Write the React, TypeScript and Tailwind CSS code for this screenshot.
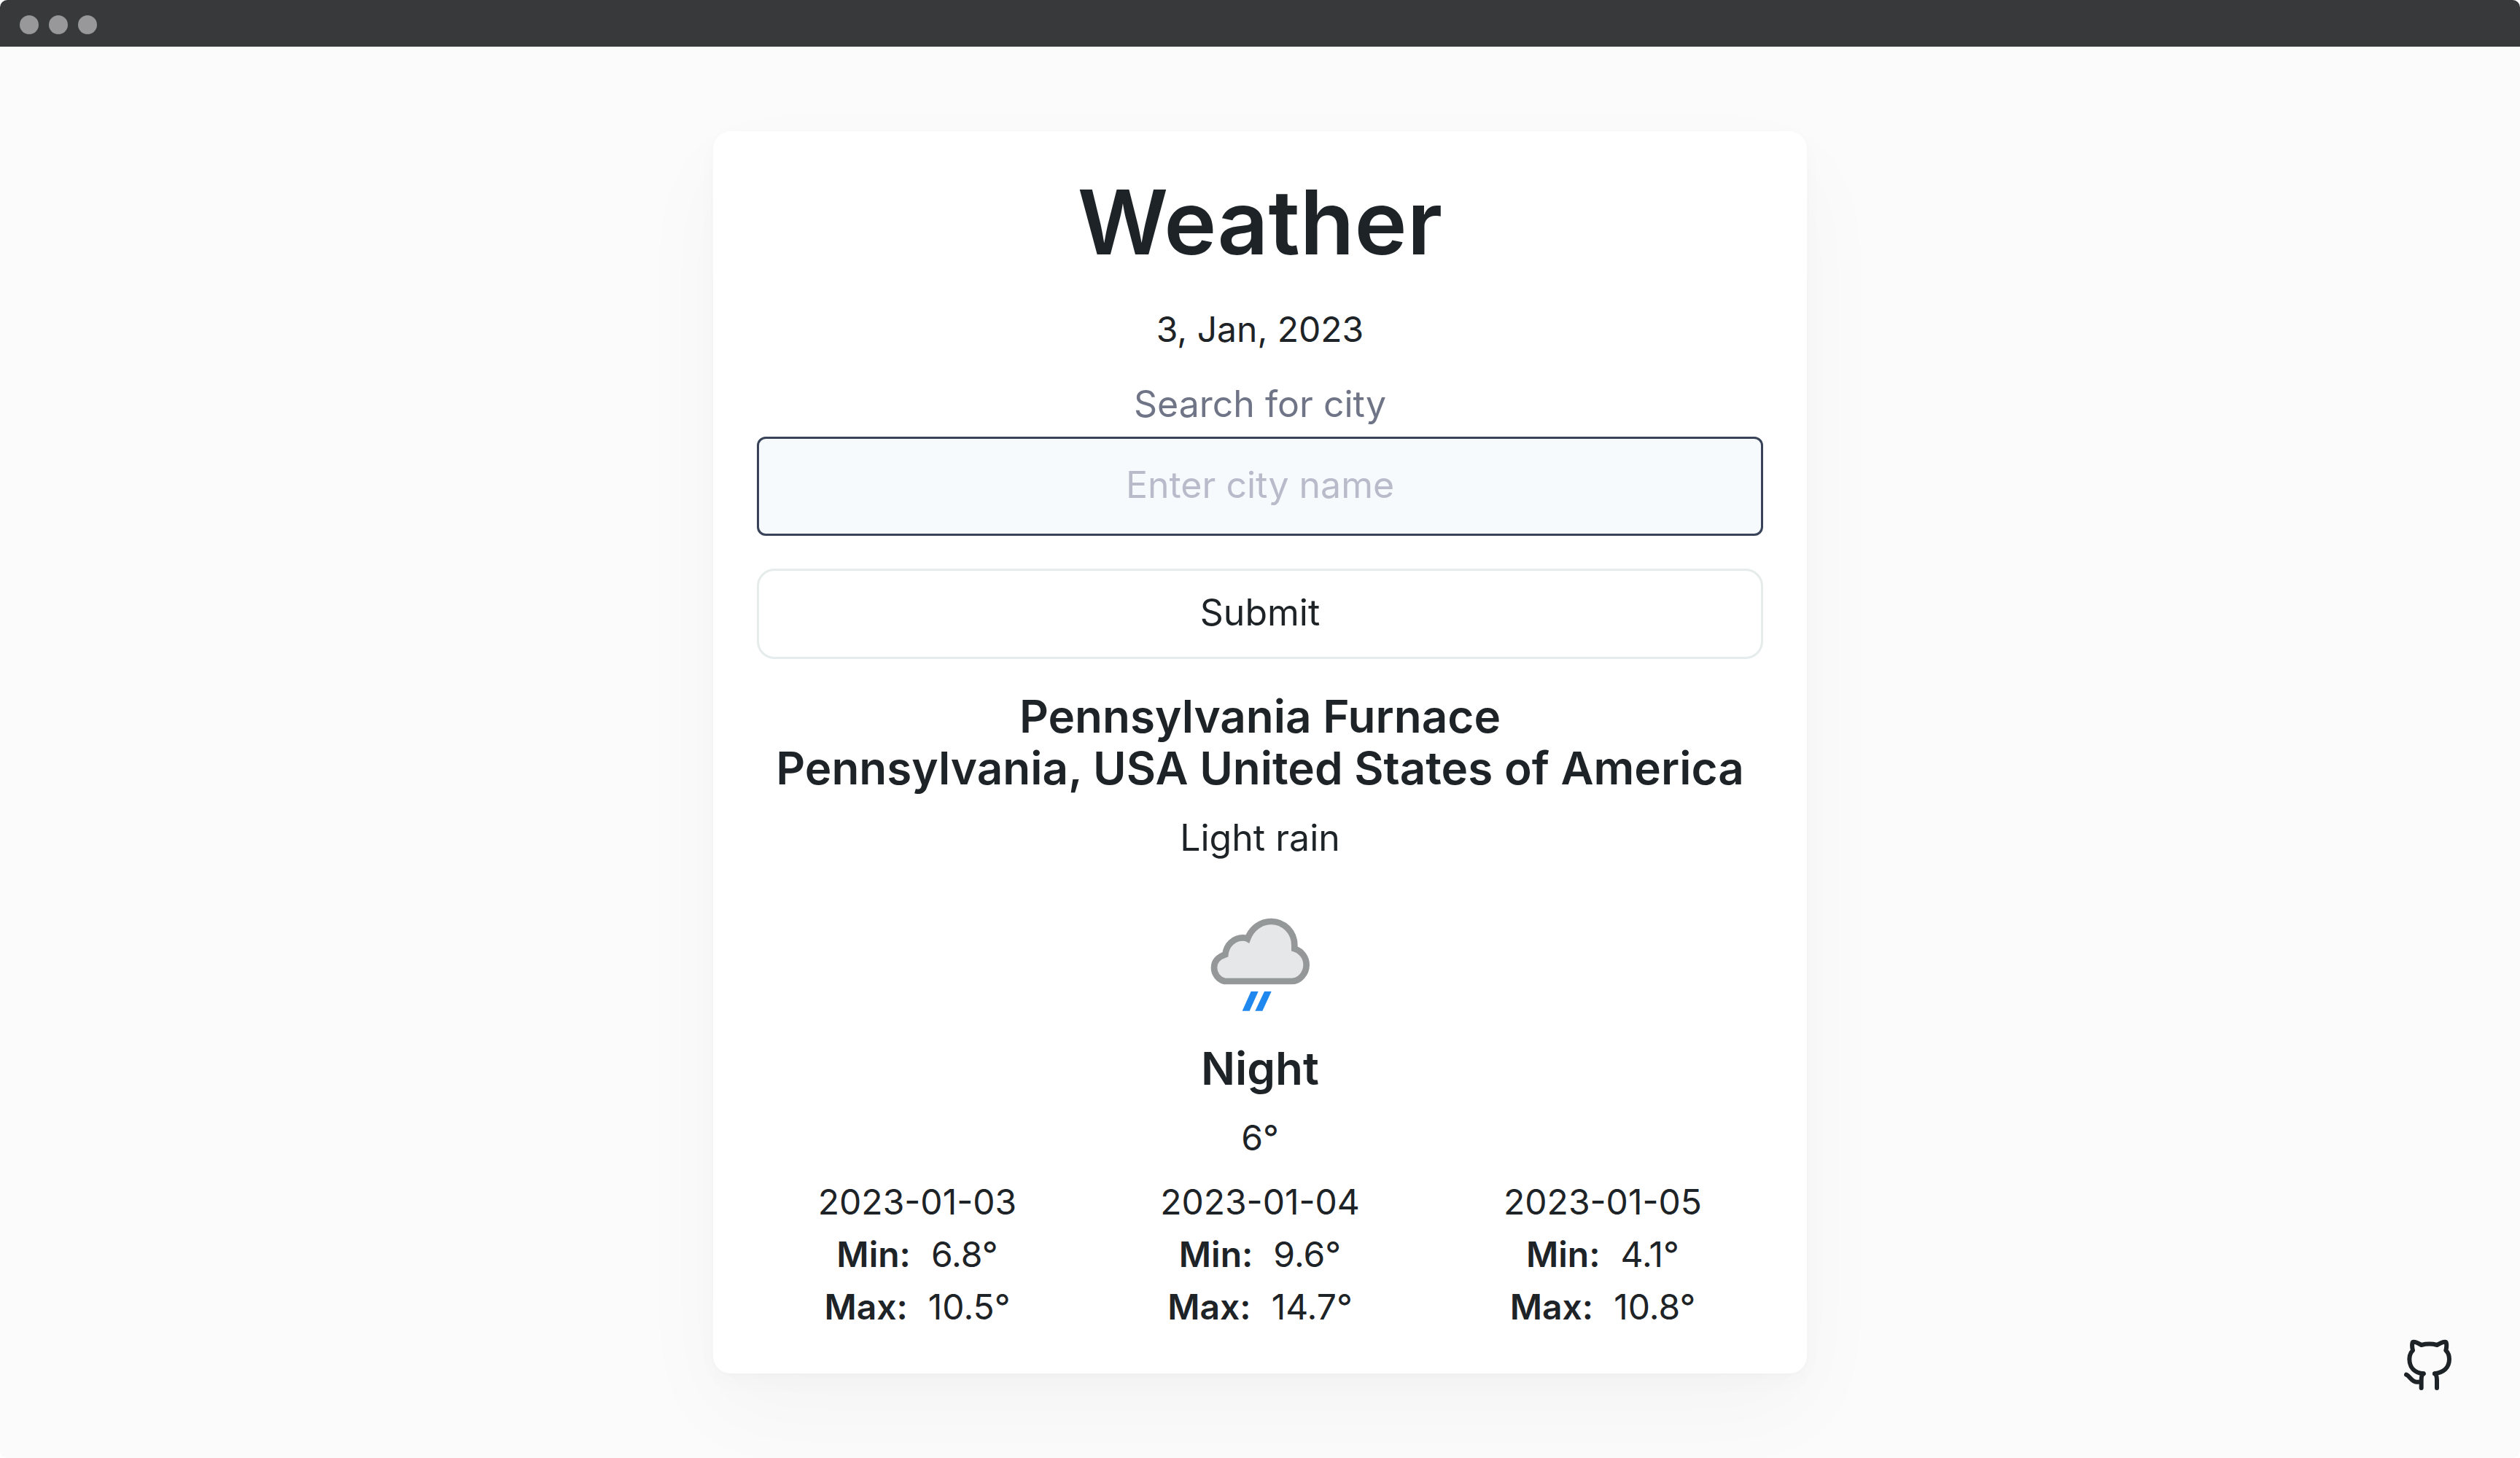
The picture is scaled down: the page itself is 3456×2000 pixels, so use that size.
type Forecast = { date: string; min: string; max: string };

const forecast: Forecast[] = [
  { date: "2023-01-03", min: "6.8°", max: "10.5°" },
  { date: "2023-01-04", min: "9.6°", max: "14.7°" },
  { date: "2023-01-05", min: "4.1°", max: "10.8°" },
];

function TitleBar() {
  return (
    <header className="flex h-16 items-center gap-[14px] bg-[#38393a] px-[27px] pt-1">
      <span className="size-[26px] rounded-full bg-[#98989a]" />
      <span className="size-[26px] rounded-full bg-[#98989a]" />
      <span className="size-[26px] rounded-full bg-[#98989a]" />
    </header>
  );
}

function RainIcon() {
  return (
    <svg viewBox="0 0 768 600" className="mt-[35px] mb-[10px] w-64" role="img" aria-label="Light rain">
      <path
        d="M238 378 A57 57 0 0 1 195 322 C195 297 212 277 241 268 C245 228 276 199 314 199 C321 199 328 200 333 203 C349 160 386 132 430 132 C484 132 526 176 526 230 V244 C555 253 575 280 575 310 C575 348 546 378 515 378 Z"
        fill="#e5e7e9"
        stroke="#949899"
        strokeWidth="26"
      />
      <path d="M347 420 H377 L341 500 H311 Z M402 420 H431 L394 500 H364 Z" fill="#1f88ee" />
    </svg>
  );
}

function GithubIcon() {
  return (
    <svg
      viewBox="165 108 207 216"
      className="h-[72px] w-[69px]"
      fill="none"
      stroke="#1d2326"
      strokeWidth="18"
      strokeLinecap="round"
      strokeLinejoin="round"
      aria-hidden="true"
    >
      <path d="M251 253 C215 250 193 228 193 193 C193 178 198 166 207 157 C204 145 203 134 206 124 Q207 122 210 122 C221 122 233 129 242 135 C262 130 288 130 307 135 C316 129 329 122 340 122 Q343 122 344 124 C347 134 346 145 343 157 C352 166 357 178 357 193 C357 228 334 248 297 253" />
      <path d="M251 253 C245 256 242 266 242 280 V312" />
      <path d="M297 253 C303 256 306 266 306 280 V312" />
      <path d="M180 257 C194 262 202 287 222 287 H240" />
    </svg>
  );
}

function Day({ date, min, max }: Forecast) {
  return (
    <div className="text-[48px] leading-[72px]">
      <p>{date}</p>
      <p className="flex justify-center gap-7">
        <strong className="font-semibold">Min:</strong>
        <span>{min}</span>
      </p>
      <p className="flex justify-center gap-7">
        <strong className="font-semibold">Max:</strong>
        <span>{max}</span>
      </p>
    </div>
  );
}

export default function App() {
  return (
    <div className="bg-white">
      <div className="relative flex min-h-screen flex-col overflow-hidden rounded-[10px] bg-[#fbfbfb] font-[Inter,sans-serif] text-[#1d2326]">
        <TitleBar />
        <main className="flex flex-1 items-center justify-center py-[116px]">
          <section className="flex w-full max-w-[1500px] flex-col items-center rounded-3xl bg-white px-[60px] pt-[60px] pb-[55px] text-center shadow-[0_2px_8px_rgba(0,0,0,0.015),0_12px_32px_rgba(0,0,0,0.02),0_50px_130px_rgba(0,0,0,0.03)]">
            <h1 className="text-[122px] leading-[130px] font-semibold">Weather</h1>
            <p className="mt-[46px] text-[48px] leading-[72px]">3, Jan, 2023</p>
            <form className="mt-[30px] flex w-full flex-col" onSubmit={(e) => e.preventDefault()}>
              <label htmlFor="city" className="text-[50px] leading-[72px] text-[#6f7587]">
                Search for city
              </label>
              <input
                id="city"
                type="text"
                placeholder="Enter city name"
                className="mt-[9px] h-[136px] rounded-xl border-[3px] border-[#38435a] bg-[#f6fafd] px-8 pb-1 text-center text-[50px] outline-none placeholder:text-[#b9bbcb]"
              />
              <button
                type="submit"
                className="mt-[45px] h-[124px] rounded-3xl border-[3px] border-[#e6ebeb] bg-white pb-1 text-[50px]"
              >
                Submit
              </button>
            </form>
            <h2 className="mt-[43px] text-[62px] leading-[71px] font-semibold">
              Pennsylvania Furnace
              <br />
              Pennsylvania, USA United States of America
            </h2>
            <p className="mt-6 text-[50px] leading-[72px]">Light rain</p>
            <RainIcon />
            <h2 className="text-[62px] leading-[71px] font-semibold">Night</h2>
            <p className="mt-6 text-[48px] leading-[72px]">6°</p>
            <div className="mt-4 grid w-full grid-cols-3 gap-[30px]">
              {forecast.map((day) => (
                <Day key={day.date} {...day} />
              ))}
            </div>
          </section>
        </main>
        <a href="https://github.com" aria-label="GitHub" className="absolute right-[92px] bottom-[92px]">
          <GithubIcon />
        </a>
      </div>
    </div>
  );
}
